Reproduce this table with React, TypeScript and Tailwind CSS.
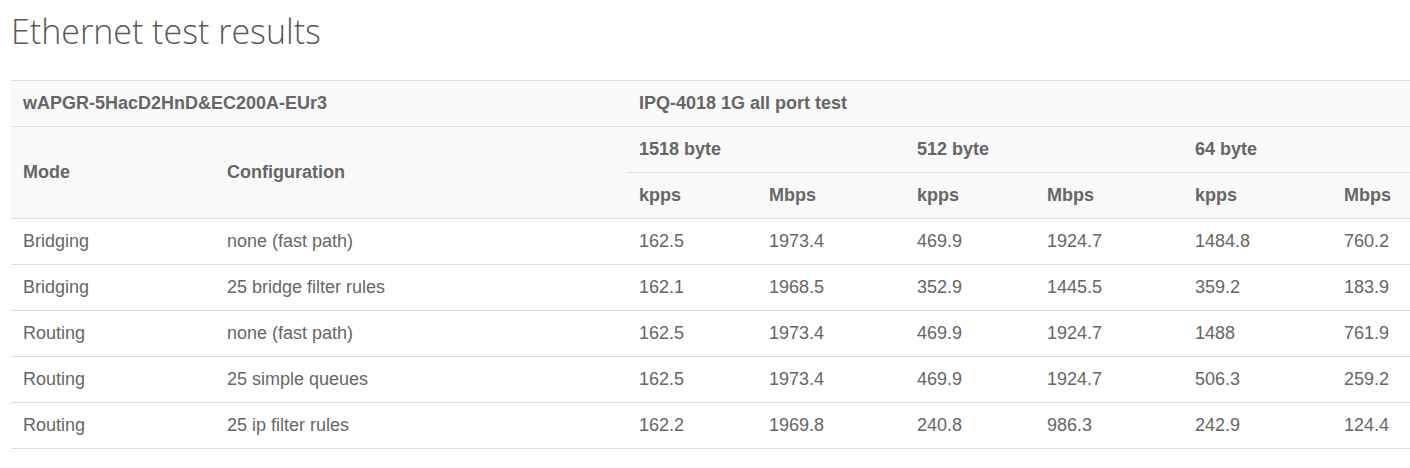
import React from "react";

const rows = [
  ["Bridging", "none (fast path)", "162.5", "1973.4", "469.9", "1924.7", "1484.8", "760.2"],
  ["Bridging", "25 bridge filter rules", "162.1", "1968.5", "352.9", "1445.5", "359.2", "183.9"],
  ["Routing", "none (fast path)", "162.5", "1973.4", "469.9", "1924.7", "1488", "761.9"],
  ["Routing", "25 simple queues", "162.5", "1973.4", "469.9", "1924.7", "506.3", "259.2"],
  ["Routing", "25 ip filter rules", "162.2", "1969.8", "240.8", "986.3", "242.9", "124.4"],
];

const widths = [204, 412, 130, 148, 130, 148, 149, 89];

export default function App() {
  const th = "h-[46px] px-3 py-0 text-left align-middle font-bold border-t border-[#dddddd]";
  const td = "h-[46px] px-3 py-0 text-left align-middle font-normal border-t border-[#dddddd]";
  return (
    <div className="w-[1410px] h-[468px] bg-white overflow-hidden">
      <h1
        className="pl-[11px] pt-[8px] text-[34px] leading-[46px] font-light text-[#585858]"
        style={{ fontFamily: '"Open Sans", sans-serif' }}
      >
        Ethernet test results
      </h1>
      <div className="pl-[11px] pt-[26px]">
        <table
          className="border-collapse table-fixed w-[1399px] text-[18px] text-[#666666] border-b border-[#dddddd]"
          style={{ fontFamily: '"Liberation Sans", Arial, sans-serif' }}
        >
          <colgroup>
            {widths.map((w, i) => (
              <col key={i} style={{ width: w }} />
            ))}
          </colgroup>
          <thead className="bg-[#f9f9f9]">
            <tr>
              <th className={th} colSpan={2}>wAPGR-5HacD2HnD&amp;EC200A-EUr3</th>
              <th className={th} colSpan={6}>IPQ-4018 1G all port test</th>
            </tr>
            <tr>
              <th className={th} rowSpan={2}>Mode</th>
              <th className={th} rowSpan={2}>Configuration</th>
              <th className={th} colSpan={2}>1518 byte</th>
              <th className={th} colSpan={2}>512 byte</th>
              <th className={th} colSpan={2}>64 byte</th>
            </tr>
            <tr>
              <th className={th}>kpps</th>
              <th className={th}>Mbps</th>
              <th className={th}>kpps</th>
              <th className={th}>Mbps</th>
              <th className={th}>kpps</th>
              <th className={th}>Mbps</th>
            </tr>
          </thead>
          <tbody>
            {rows.map((r, i) => (
              <tr key={i}>
                {r.map((c, j) => (
                  <td key={j} className={td}>
                    {c}
                  </td>
                ))}
              </tr>
            ))}
          </tbody>
        </table>
      </div>
    </div>
  );
}
